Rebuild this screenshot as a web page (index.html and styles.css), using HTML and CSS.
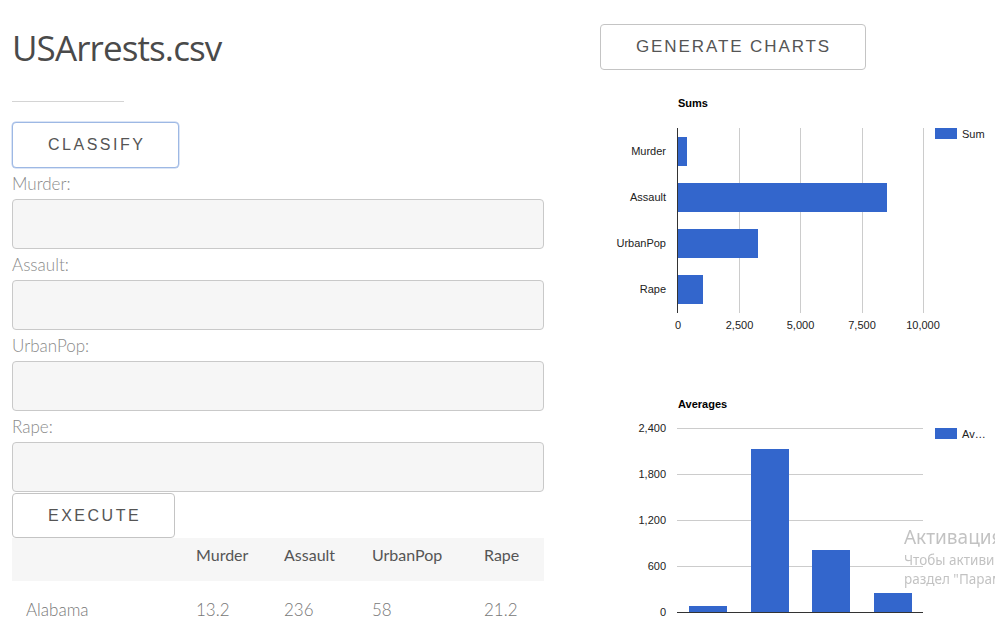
FILE: index.html
```html
<!DOCTYPE html>
<html lang="en">
<head>
<meta charset="utf-8">
<title>USArrests.csv</title>
<link rel="stylesheet" href="styles.css">
</head>
<body>
<div class="page">
  <section class="left">
    <h3 class="title">USArrests.csv</h3>
    <hr class="rule">
    <button class="btn btn-focus">Classify</button>
    <label class="field-label">Murder:</label>
    <input class="field" type="text">
    <label class="field-label">Assault:</label>
    <input class="field" type="text">
    <label class="field-label">UrbanPop:</label>
    <input class="field" type="text">
    <label class="field-label">Rape:</label>
    <input class="field" type="text">
    <button class="btn btn-exec">Execute</button>
    <table class="data">
      <colgroup>
        <col class="c-state"><col class="c-num"><col class="c-num"><col class="c-pop"><col class="c-rape">
      </colgroup>
      <thead>
        <tr><th></th><th>Murder</th><th>Assault</th><th>UrbanPop</th><th>Rape</th></tr>
      </thead>
      <tbody>
        <tr><td>Alabama</td><td>13.2</td><td>236</td><td>58</td><td>21.2</td></tr>
      </tbody>
    </table>
  </section>
  <section class="right">
    <button class="btn btn-gen">Generate Charts</button>
    <svg class="chart chart-sums" width="395" height="300" viewBox="0 0 395 300">
      <text class="ct" x="78" y="37">Sums</text>
      <g class="grid">
        <line x1="139.5" y1="58" x2="139.5" y2="243"/>
        <line x1="200.5" y1="58" x2="200.5" y2="243"/>
        <line x1="262.5" y1="58" x2="262.5" y2="243"/>
        <line x1="323.5" y1="58" x2="323.5" y2="243"/>
      </g>
      <g class="bars">
        <rect x="77" y="67" width="10" height="29"/>
        <rect x="77" y="113" width="210" height="29"/>
        <rect x="77" y="159" width="81" height="29"/>
        <rect x="77" y="205" width="26" height="29"/>
      </g>
      <line class="axis" x1="77.5" y1="58" x2="77.5" y2="243"/>
      <g class="lbl end">
        <text x="66" y="85">Murder</text>
        <text x="66" y="131">Assault</text>
        <text x="66" y="177">UrbanPop</text>
        <text x="66" y="223">Rape</text>
      </g>
      <g class="lbl mid">
        <text x="78" y="259">0</text>
        <text x="139.5" y="259">2,500</text>
        <text x="200.5" y="259">5,000</text>
        <text x="262" y="259">7,500</text>
        <text x="323" y="259">10,000</text>
      </g>
      <rect class="legend" x="335" y="58" width="22" height="11"/>
      <text class="lbl" x="362" y="67.5">Sum</text>
    </svg>
    <svg class="chart chart-avg" width="395" height="260" viewBox="0 0 395 260">
      <text class="ct" x="78" y="38">Averages</text>
      <g class="grid">
        <line x1="77" y1="58.5" x2="323" y2="58.5"/>
        <line x1="77" y1="104.5" x2="323" y2="104.5"/>
        <line x1="77" y1="150.5" x2="323" y2="150.5"/>
        <line x1="77" y1="196.5" x2="323" y2="196.5"/>
      </g>
      <g class="bars">
        <rect x="89" y="236" width="38" height="6"/>
        <rect x="151" y="79" width="38" height="163"/>
        <rect x="212" y="180" width="38" height="62"/>
        <rect x="274" y="223" width="38" height="19"/>
      </g>
      <line class="axis" x1="77" y1="242.5" x2="323" y2="242.5"/>
      <g class="lbl end">
        <text x="66" y="62">2,400</text>
        <text x="66" y="108">1,800</text>
        <text x="66" y="154">1,200</text>
        <text x="66" y="200">600</text>
        <text x="66" y="246">0</text>
      </g>
      <rect class="legend" x="335" y="58" width="22" height="11"/>
      <text class="lbl" x="362" y="67.5">Av…</text>
    </svg>
  </section>
</div>
<div class="watermark">
  <div class="wm-big">Активация Windows</div>
  <div class="wm-small">Чтобы активировать Windows, перейдите в</div>
  <div class="wm-small">раздел "Параметры".</div>
</div>
</body>
</html>
```
FILE: styles.css
```css
html, body {
  margin: 0;
  padding: 0;
  background: #fff;
  overflow: hidden;
}
body {
  font-family: Lato, "Open Sans", sans-serif;
  color: #555;
}
.page {
  display: flex;
  gap: 56px;
  padding-left: 12px;
}
.left {
  width: 532px;
  display: flex;
  flex-direction: column;
  align-items: flex-start;
}
.title {
  margin: 27px 0 0;
  font-family: "Open Sans", sans-serif;
  font-weight: 400;
  font-size: 35px;
  line-height: 42px;
  color: #4a4a4a;
  letter-spacing: -0.9px;
}
.rule {
  margin: 32px 0 0;
  width: 112px;
  border: 0;
  border-top: 1px solid #d4d4d4;
  height: 0;
}
.btn {
  box-sizing: border-box;
  background: #fff;
  border: 1px solid #c4c4c4;
  border-radius: 4px;
  padding: 0 33px 0 35px;
  font-family: "Liberation Sans", Arial, sans-serif;
  font-size: 16px;
  letter-spacing: 2.5px;
  text-transform: uppercase;
  color: #555;
  cursor: pointer;
}
.btn-focus {
  margin-top: 20px;
  height: 46px;
  border-color: #9db8e4;
  box-shadow: 0 0 0 0.5px #b7cbed;
}
.btn-exec {
  margin-top: 1px;
  height: 45px;
}
.btn-gen {
  margin-top: 24px;
  height: 46px;
  font-size: 17px;
  letter-spacing: 1.9px;
  padding: 0 34px 0 35px;
}
.field-label {
  display: block;
  height: 31px;
  line-height: 31px;
  font-size: 17px;
  font-weight: 300;
  color: #8a8a8a;
}
.field {
  box-sizing: border-box;
  width: 532px;
  height: 50px;
  margin: 0;
  background: #f6f6f6;
  border: 1px solid #c9c9c9;
  border-radius: 4px;
}
.data {
  width: 532px;
  table-layout: fixed;
  border-collapse: collapse;
  font-size: 16px;
  line-height: 24px;
}
.c-state { width: 170px; }
.c-num { width: 88px; }
.c-pop { width: 112px; }
.c-rape { width: 74px; }
.data thead tr {
  background: #f6f6f6;
}
.data th {
  height: 43px;
  box-sizing: border-box;
  padding: 5px 0 14px 14px;
  text-align: left;
  vertical-align: top;
  font-weight: 400;
  color: #555;
}
.data td {
  padding: 17px 0 16px 14px;
  font-size: 17px;
  font-weight: 300;
  color: #777;
}
.right {
  width: 395px;
  display: flex;
  flex-direction: column;
  align-items: flex-start;
}
.chart {
  display: block;
  font-family: "Liberation Sans", Arial, sans-serif;
}
.ct {
  font-size: 11px;
  font-weight: 700;
  fill: #000;
}
.grid line {
  stroke: #cccccc;
  stroke-width: 1;
}
.axis {
  stroke: #333;
  stroke-width: 1;
}
.bars rect, .legend {
  fill: #3366cc;
}
.lbl {
  font-size: 11px;
  fill: #222;
}
.lbl.end text { text-anchor: end; }
.lbl.mid text { text-anchor: middle; }
.watermark {
  position: fixed;
  left: 904px;
  top: 524px;
  white-space: nowrap;
  font-family: "Noto Sans", "Open Sans", sans-serif;
  color: rgba(120, 120, 120, 0.45);
  pointer-events: none;
}
.wm-big {
  font-size: 19px;
  line-height: 27px;
}
.wm-small {
  font-size: 13.5px;
  line-height: 19px;
}
```
